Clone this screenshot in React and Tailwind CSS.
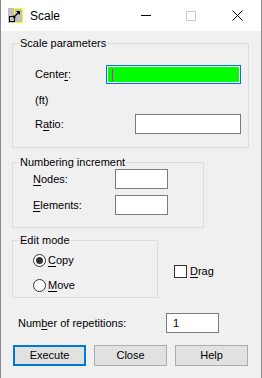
import React from 'react';

const font = { fontFamily: '"Liberation Sans", Arial, sans-serif' };

const Key = ({ children }) => <span className="underline underline-offset-[2px]">{children}</span>;

const TextBox = ({ className = '', children }) => (
    <div className={`h-[20px] border border-[#7a7a7a] bg-white flex items-center pl-[6px] ${className}`}>
        {children}
    </div>
);

// group box: padding lives on the inner div so the legend stays at the left
const Group = ({ title, className = '', inner = '', children }) => (
    <fieldset className={`border border-[#dcdcdc] ${className}`}>
        <legend className="ml-[6px] px-[1px] leading-[14px]">{title}</legend>
        <div className={inner}>{children}</div>
    </fieldset>
);

const Radio = ({ checked, children }) => (
    <div className="flex items-center h-[13px] gap-[2px]">
        <span className="w-[13px] h-[13px] rounded-full border border-[#333] bg-white flex items-center justify-center">
            {checked && <span className="w-[7px] h-[7px] rounded-full bg-[#333]" />}
        </span>
        <span className="leading-[13px]">{children}</span>
    </div>
);

const AppIcon = () => (
    <svg width="15" height="15" viewBox="0 0 15 15">
        <rect x="0" y="0" width="15" height="15" fill="#c0c0c0" />
        <rect x="6.5" y="0.5" width="8" height="14" fill="none" stroke="#ffff00" />
        <rect x="1.5" y="8.5" width="5" height="5" fill="none" stroke="#000" />
        <path d="M6 9 L11 4" stroke="#000" strokeWidth="1.2" />
        <path d="M8 3 H12 V7 Z" fill="#000" />
        <path d="M5 7 V10 H8 Z" fill="#000" />
    </svg>
);

export default function App() {
    return (
        <div className="w-[262px] h-[378px] border-x border-[#8a8a8a] flex flex-col text-[11px] text-black" style={font}>
            {/* title bar */}
            <div className="h-[31px] bg-white flex items-center shrink-0">
                <div className="ml-[7px]"><AppIcon /></div>
                <span className="ml-[7px] text-[12px]">Scale</span>
                <span className="ml-auto w-[10px] h-px bg-black" />
                <span className="ml-[35px] w-[10px] h-[10px] border border-[#cccccc]" />
                <svg className="ml-[36px] mr-[18px]" width="11" height="11" viewBox="0 0 11 11">
                    <path d="M0.5 0.5 L10.5 10.5 M10.5 0.5 L0.5 10.5" stroke="#000" strokeWidth="1" />
                </svg>
            </div>

            {/* body */}
            <div className="flex-1 bg-[#f0f0f0] pl-[11px] pt-[5px]">
                <Group title="Scale parameters" className="w-[237px]" inner="pl-[22px] pr-[7px] pb-[13px]">
                    <div className="flex items-center mt-[15px] h-[19px]">
                        <span>Cente<Key>r</Key>:</span>
                        <div className="ml-auto w-[135px] h-[19px] border border-[#0078d7] bg-white p-px">
                            <div className="h-full bg-[#00ff00] flex items-center pl-[4px]">
                                <span className="w-px h-[12px] bg-[#ff00ff]" />
                            </div>
                        </div>
                    </div>
                    <div className="mt-[9px] leading-[15px]">(ft)</div>
                    <div className="flex items-center mt-[6px]">
                        <span>R<Key>a</Key>tio:</span>
                        <TextBox className="ml-auto w-[106px] h-[19px]" />
                    </div>
                </Group>

                <Group title="Numbering increment" className="w-[192px] mt-[7px]" inner="pl-[20px] pb-[12px]">
                    <div className="flex items-center">
                        <span className="w-[82px]"><Key>N</Key>odes:</span>
                        <TextBox className="w-[53px]" />
                    </div>
                    <div className="flex items-center mt-[6px]">
                        <span className="w-[82px]"><Key>E</Key>lements:</span>
                        <TextBox className="w-[53px]" />
                    </div>
                </Group>

                <div className="flex items-start mt-[5px]">
                    <Group title="Edit mode" className="w-[146px]" inner="pl-[20px] pb-[5px]">
                        <div className="mt-[7px]">
                            <Radio checked><Key>C</Key>opy</Radio>
                        </div>
                        <div className="mt-[12px]">
                            <Radio><Key>M</Key>ove</Radio>
                        </div>
                    </Group>
                    <div className="ml-[16px] mt-[32px] flex items-center gap-[3px]">
                        <span className="w-[13px] h-[13px] border border-[#333] bg-white" />
                        <span className="leading-[13px]"><Key>D</Key>rag</span>
                    </div>
                </div>

                <div className="flex items-center mt-[15px] pl-[6px]">
                    <span className="w-[148px]">Num<Key>b</Key>er of repetitions:</span>
                    <TextBox className="w-[53px]">1</TextBox>
                </div>

                <div className="flex gap-[8px] mt-[12px] pl-[1px]">
                    <button className="w-[73px] h-[21px] bg-[#e1e1e1] border-2 border-[#0078d7]">Execute</button>
                    <button className="w-[73px] h-[21px] bg-[#e1e1e1] border border-[#adadad]">Close</button>
                    <button className="w-[73px] h-[21px] bg-[#e1e1e1] border border-[#adadad]">Help</button>
                </div>
            </div>
        </div>
    );
}
